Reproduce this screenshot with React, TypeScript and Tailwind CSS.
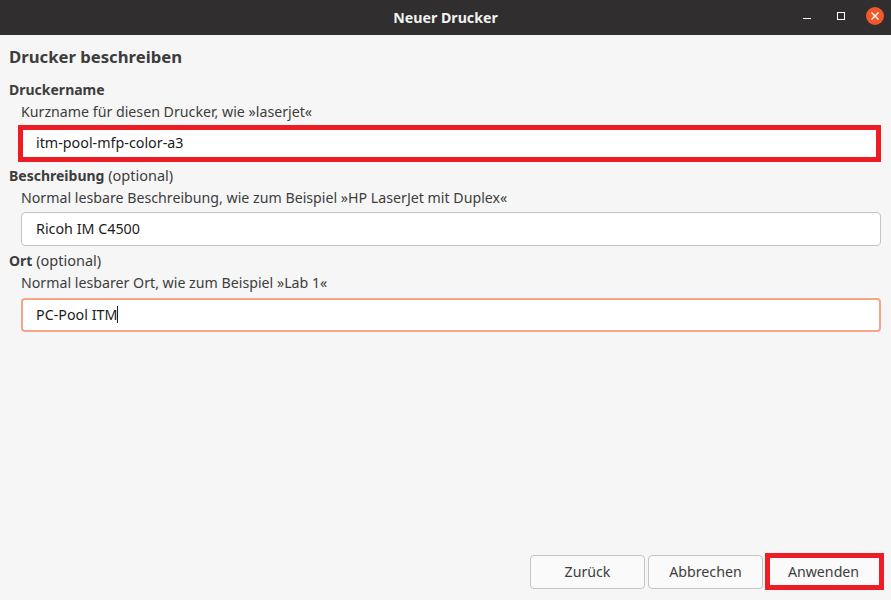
const font = "font-['Noto_Sans',sans-serif]"

function Field({ title, optional, hint, children }: { title: string; optional?: boolean; hint: string; children: React.ReactNode }) {
  return (
    <div>
      <div className="h-[20px] text-[14.5px] leading-[20px] pl-[9px] text-[#3d3d3d]">
        <span className="font-bold text-[14px]">{title}</span>
        {optional && <span> (optional)</span>}
      </div>
      <div className="h-[20px] mt-[3px] text-[14.2px] leading-[20px] pl-[21px] text-[#3d3d3d]">{hint}</div>
      {children}
    </div>
  )
}

export default function App() {
  return (
    <div className={`${font} w-[891px] h-[600px] flex flex-col bg-[#f6f6f6] overflow-hidden`}>
      <div className="h-[35px] shrink-0 bg-[#302e2e] flex items-center relative">
        <div className="flex-1 text-center text-[14.2px] font-bold text-[#f2f2f2]">Neuer Drucker</div>
        <div className="absolute right-[7px] top-[7px] flex items-center">
          <div className="w-[8px] h-[1px] bg-white mr-[26px] mt-[4px]" />
          <div className="w-[8px] h-[8px] border border-white mr-[21px]" />
          <div className="w-[18px] h-[18px] rounded-full bg-[#f0592a] flex items-center justify-center">
            <svg width="10" height="10" viewBox="0 0 10 10" fill="none" stroke="white" strokeWidth="1.4">
              <path d="M1.5 1.5 L8.5 8.5 M8.5 1.5 L1.5 8.5" />
            </svg>
          </div>
        </div>
      </div>

      <div className="flex-1 flex flex-col">
        <div className="h-[24px] mt-[10px] pl-[9px] text-[16.7px] leading-[24px] font-bold text-[#3d3d3d]">Drucker beschreiben</div>
        <div className="mt-[10px]">
          <Field title="Druckername" hint="Kurzname für diesen Drucker, wie »laserjet«">
            <div className="ml-[18px] mr-[10px] mt-[3px] h-[37px] border-[5px] border-[#ee1c25] bg-white pl-[13px] pb-[2px] flex items-center text-[14.3px] text-[#1c1c1c]">
              itm-pool-mfp-color-a3
            </div>
          </Field>
        </div>
        <div className="mt-[3px]">
          <Field title="Beschreibung" optional hint="Normal lesbare Beschreibung, wie zum Beispiel »HP LaserJet mit Duplex«">
            <div className="ml-[21px] mr-[10px] mt-[4px] h-[34px] border border-[#c4c4c4] rounded-[4px] bg-white pl-[14px] flex items-center text-[14.3px] text-[#1c1c1c]">
              Ricoh IM C4500
            </div>
          </Field>
        </div>
        <div className="mt-[4px]">
          <Field title="Ort" optional hint="Normal lesbarer Ort, wie zum Beispiel »Lab 1«">
            <div className="ml-[21px] mr-[10px] mt-[5px] h-[34px] border-[2px] border-[#f4a58c] rounded-[4px] bg-white pl-[13px] pb-[1px] flex items-center text-[14.3px] text-[#1c1c1c]">
              PC-Pool ITM<span className="w-[1px] h-[17px] bg-[#1c1c1c]" />
            </div>
          </Field>
        </div>

        <div className="mt-auto mb-[10px] flex items-center justify-end pr-[7px]">
          <button className="w-[115px] h-[34px] border border-[#c4c4c4] rounded-[4px] bg-[#fafafa] text-[14.2px] text-[#3d3d3d]">Zurück</button>
          <button className="ml-[3px] w-[115px] h-[34px] border border-[#c4c4c4] rounded-[4px] bg-[#fafafa] text-[14.2px] text-[#3d3d3d]">Abbrechen</button>
          <button className="ml-[2px] w-[119px] h-[37px] border-[5px] border-[#ee1c25] bg-[#fafafa] pr-[2px] text-[14.2px] text-[#3d3d3d]">Anwenden</button>
        </div>
      </div>
    </div>
  )
}
